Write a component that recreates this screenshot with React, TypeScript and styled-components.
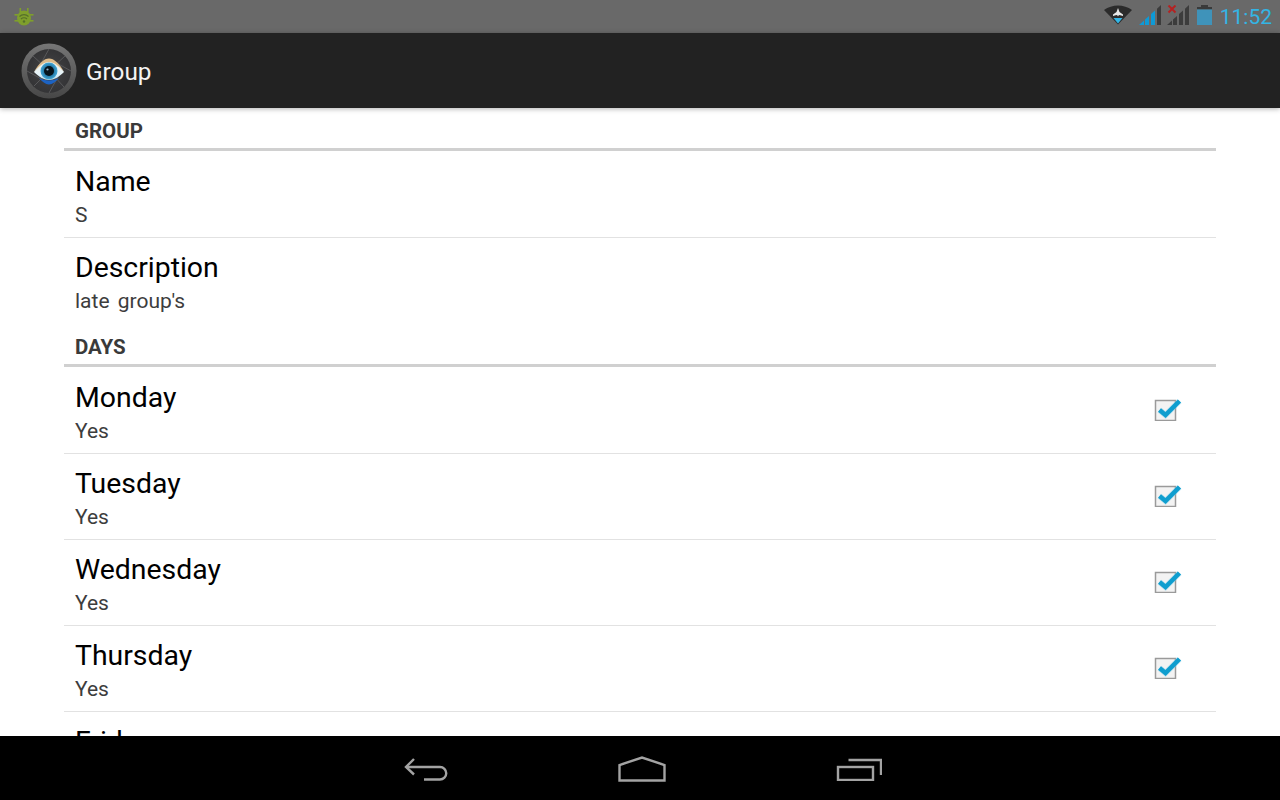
import styled, { createGlobalStyle } from "styled-components";

const GlobalStyle = createGlobalStyle`
  html, body {
    margin: 0;
    padding: 0;
    background: #000;
  }
  * {
    box-sizing: border-box;
  }
`;

function BugIcon() {
  return (
    <svg width="20" height="20" viewBox="0 0 20 20">
      <g fill="#7f9f2c">
        <ellipse cx="10" cy="11" rx="7" ry="7.5" />
        <rect x="5.5" y="1" width="1.6" height="4" />
        <rect x="13" y="1" width="1.6" height="4" />
        <rect x="0.5" y="7" width="3.5" height="1.6" />
        <rect x="16" y="7" width="3.5" height="1.6" />
        <rect x="0.5" y="13" width="3.5" height="1.6" />
        <rect x="16" y="13" width="3.5" height="1.6" />
      </g>
      <path d="M5.5 9.5a6.5 6.5 0 0 1 9 0M7 12a4.2 4.2 0 0 1 6 0" fill="none" stroke="#56702a" strokeWidth="1.2" />
      <circle cx="10" cy="14.5" r="1.2" fill="#56702a" />
    </svg>
  );
}

function AirplaneWifiIcon() {
  return (
    <svg width="28" height="20" viewBox="0 0 28 20">
      <path d="M0 5C4 2 9 .5 14 .5s10 1.500 14 4.500L14 19.500Z" fill="#2b2b2b" />
      <path d="M14 3l1.500 4 3.500 2.500v1.500l-3.500-1-1 .5-.5 1-.5-1-1-.5-3.500 1V9.500L12.500 7Z" fill="#e8e8e8" />
      <path d="M9.500 13h9L14 18.500Z" fill="#33b5e5" />
    </svg>
  );
}

// wedge shaped bars: the tops follow one slanted line from bottom left to top right
const wedgeBars = [
  [0, 5],
  [6, 10],
  [12, 16],
  [18, 22],
];

function wedgePoints(a: number, b: number) {
  const top = (x: number) => 20 - (x * 20) / 22;
  return `${a},20 ${a},${top(a)} ${b},${top(b)} ${b},20`;
}

function SignalIcon() {
  return (
    <svg width="28" height="20" viewBox="-4 0 28 20">
      {wedgeBars.map(([a, b], i) => (
        <polygon key={a} points={wedgePoints(a, b)} fill={i < 3 ? "#0d9ad6" : "#3c3c3c"} />
      ))}
    </svg>
  );
}

function NoSimIcon() {
  return (
    <svg width="24" height="20" viewBox="-1 0 24 20">
      {wedgeBars.map(([a, b]) => (
        <polygon key={a} points={wedgePoints(a, b)} fill="#3c3c3c" />
      ))}
      <path d="M1.500 .5l7 7M8.500 .5l-7 7" stroke="#b52222" strokeWidth="2" fill="none" />
    </svg>
  );
}

function BatteryIcon() {
  return (
    <svg width="19" height="20" viewBox="-4 0 19 20">
      <rect x="4" y="0" width="7" height="2" fill="#3a3a3a" />
      <rect x="0" y="2" width="15" height="2.500" fill="#3a3a3a" />
      <rect x="0" y="4.500" width="15" height="15.500" fill="#3f93ba" />
    </svg>
  );
}

function EyeLogo() {
  return (
    <svg width="56" height="56" viewBox="0 0 56 56">
      <defs>
        <radialGradient id="lens" cx="50%" cy="50%" r="50%">
          <stop offset="0%" stopColor="#444446" />
          <stop offset="100%" stopColor="#343436" />
        </radialGradient>
        <linearGradient id="rim" x1="0" y1="0" x2="0" y2="1">
          <stop offset="0%" stopColor="#767676" />
          <stop offset="60%" stopColor="#5a5a5a" />
          <stop offset="100%" stopColor="#474747" />
        </linearGradient>
        <linearGradient id="eyeWhite" x1="0" y1="0" x2="0" y2="1">
          <stop offset="0%" stopColor="#f3f1e8" />
          <stop offset="70%" stopColor="#e4f3fa" />
          <stop offset="100%" stopColor="#b9def0" />
        </linearGradient>
        <radialGradient id="iris" cx="50%" cy="50%" r="50%">
          <stop offset="50%" stopColor="#1f6f9c" />
          <stop offset="100%" stopColor="#44a9d8" />
        </radialGradient>
      </defs>
      <circle cx="28" cy="28" r="27.500" fill="url(#rim)" />
      <circle cx="28" cy="28" r="22" fill="url(#lens)" />
      <path d="M28 6L18 24M50 28L32 18M28 50L38 32M6 28L24 38M44 13L32 24M43 44L32 32M13 43L24 32M12 13L24 24" stroke="#58585a" strokeWidth="1" fill="none" />
      <path d="M13 29C18 20 23 15.500 28 15.500S38 20 43 29C38 24 33 22 28 22S18 24 13 29Z" fill="#dcbb8c" />
      <path d="M13 29C18 23 23 19 28 19s10 4 15 10c-5 5-10 8-15 8s-10-3-15-8Z" fill="url(#eyeWhite)" />
      <path d="M18 35c3 3.500 6.500 6.500 10 6.500s7-3 10-6.500c-3 1.500-6.500 2.500-10 2.500s-7-1-10-2.500Z" fill="#1c63c4" />
      <circle cx="28" cy="28" r="8.500" fill="url(#iris)" />
      <circle cx="28" cy="28" r="5" fill="#07141c" />
      <circle cx="26.500" cy="26.500" r="1.100" fill="#8fb4cc" />
    </svg>
  );
}

function CheckedBox() {
  return (
    <svg width="30" height="26" viewBox="0 0 30 26">
      <rect x="2.500" y="5.500" width="20" height="20" fill="#f3f3f3" stroke="#9a9a9a" strokeWidth="1.500" />
      <path d="M6.500 15l6 5L26.500 6" fill="none" stroke="#7fcbe6" strokeWidth="6" opacity="0.45" />
      <path d="M6.500 15l6 5L26.500 6" fill="none" stroke="#0f9ecf" strokeWidth="4.500" />
    </svg>
  );
}

function BackIcon() {
  return (
    <svg width="44" height="24" viewBox="0 0 44 24" fill="none" stroke="#a3a3a3" strokeWidth="2.400">
      <path d="M10 2L2 10l8 7.500" />
      <path d="M2.500 10H36a6.250 6.250 0 0 1 0 12.500H20" />
    </svg>
  );
}

function HomeIcon() {
  return (
    <svg width="48" height="26" viewBox="0 0 48 26" fill="none" stroke="#a3a3a3" strokeWidth="2.400">
      <path d="M1.500 24.500V9L24 1.500 46.500 9v15.500Z" />
    </svg>
  );
}

function RecentIcon() {
  return (
    <svg width="46" height="24" viewBox="0 0 46 24" fill="none" stroke="#a3a3a3" strokeWidth="2.400">
      <rect x="2" y="10" width="35" height="13" />
      <path d="M12.500 3H45v15" />
    </svg>
  );
}

type RowData = {
  title: string;
  value: string;
  checked?: boolean;
  last?: boolean;
};

const groupRows: RowData[] = [
  { title: "Name", value: "S" },
  { title: "Description", value: "late group's", last: true },
];

const dayRows: RowData[] = [
  { title: "Monday", value: "Yes", checked: true },
  { title: "Tuesday", value: "Yes", checked: true },
  { title: "Wednesday", value: "Yes", checked: true },
  { title: "Thursday", value: "Yes", checked: true },
  { title: "Friday", value: "Yes", checked: true },
];

function Row({ row }: { row: RowData }) {
  return (
    <RowBox $last={row.last}>
      <div>
        <RowTitle>{row.title}</RowTitle>
        <RowValue>{row.value}</RowValue>
      </div>
      {row.checked && (
        <CheckSlot>
          <CheckedBox />
        </CheckSlot>
      )}
    </RowBox>
  );
}

export default function App() {
  return (
    <Screen>
      <GlobalStyle />
      <StatusBar>
        <BugIcon />
        <StatusRight>
          <StatusIcons>
            <AirplaneWifiIcon />
            <SignalIcon />
            <NoSimIcon />
            <BatteryIcon />
          </StatusIcons>
          <Clock>11:52</Clock>
        </StatusRight>
      </StatusBar>
      <ActionBar>
        <EyeLogo />
        <ActionTitle>Group</ActionTitle>
      </ActionBar>
      <Content>
        <SectionHeader>GROUP</SectionHeader>
        {groupRows.map((r) => (
          <Row key={r.title} row={r} />
        ))}
        <SectionHeader>DAYS</SectionHeader>
        {dayRows.map((r) => (
          <Row key={r.title} row={r} />
        ))}
      </Content>
      <NavBar>
        <BackIcon />
        <HomeIcon />
        <RecentIcon />
      </NavBar>
    </Screen>
  );
}

const Screen = styled.div`
  width: 1280px;
  height: 800px;
  display: flex;
  flex-direction: column;
  overflow: hidden;
  font-family: Roboto, "Liberation Sans", sans-serif;
  background: #fff;
`;

const StatusBar = styled.div`
  height: 33px;
  flex: none;
  display: flex;
  align-items: center;
  justify-content: space-between;
  padding: 0 8px 0 14px;
  background: #696969;
`;

const StatusRight = styled.div`
  display: flex;
  align-items: center;
  gap: 8px;
`;

const StatusIcons = styled.div`
  display: flex;
  align-items: center;
  gap: 3px;
  margin-bottom: 3px;
`;

const Clock = styled.span`
  font-size: 21px;
  color: #33b5e5;
`;

const ActionBar = styled.div`
  height: 75px;
  flex: none;
  display: flex;
  align-items: center;
  gap: 10px;
  padding-left: 21px;
  background: #222;
  position: relative;
  box-shadow: 0 1px 5px rgba(0, 0, 0, 0.3);
`;

const ActionTitle = styled.span`
  margin: 2px 0 0 -1px;
  font-size: 24.3px;
  color: #f4f4f4;
`;

const Content = styled.div`
  flex: 1;
  min-height: 0;
  overflow: hidden;
  padding: 0 64px;
`;

const SectionHeader = styled.div`
  height: 43px;
  margin-bottom: 1px;
  padding: 11px 0 0 11px;
  border-bottom: 3px solid #d0d0d0;
  font-size: 20.5px;
  line-height: 24px;
  font-weight: 700;
  color: #3a3a3a;
`;

const RowBox = styled.div<{ $last?: boolean }>`
  height: 86px;
  display: flex;
  align-items: flex-start;
  justify-content: space-between;
  padding: 13px 33px 0 11px;
  border-bottom: 1px solid ${(p) => (p.$last ? "transparent" : "#e2e2e2")};
`;

const RowTitle = styled.div`
  font-size: 28.4px;
  line-height: 34px;
  color: #000;
`;

const RowValue = styled.div`
  font-size: 21px;
  word-spacing: 3px;
  line-height: 32px;
  color: #3d3d3d;
`;

const CheckSlot = styled.div`
  margin-top: 14px;
  line-height: 0;
`;

const NavBar = styled.div`
  height: 64px;
  flex: none;
  display: flex;
  align-items: center;
  justify-content: center;
  gap: 170px;
  padding: 2px 0 0 6px;
  background: #000;
`;
